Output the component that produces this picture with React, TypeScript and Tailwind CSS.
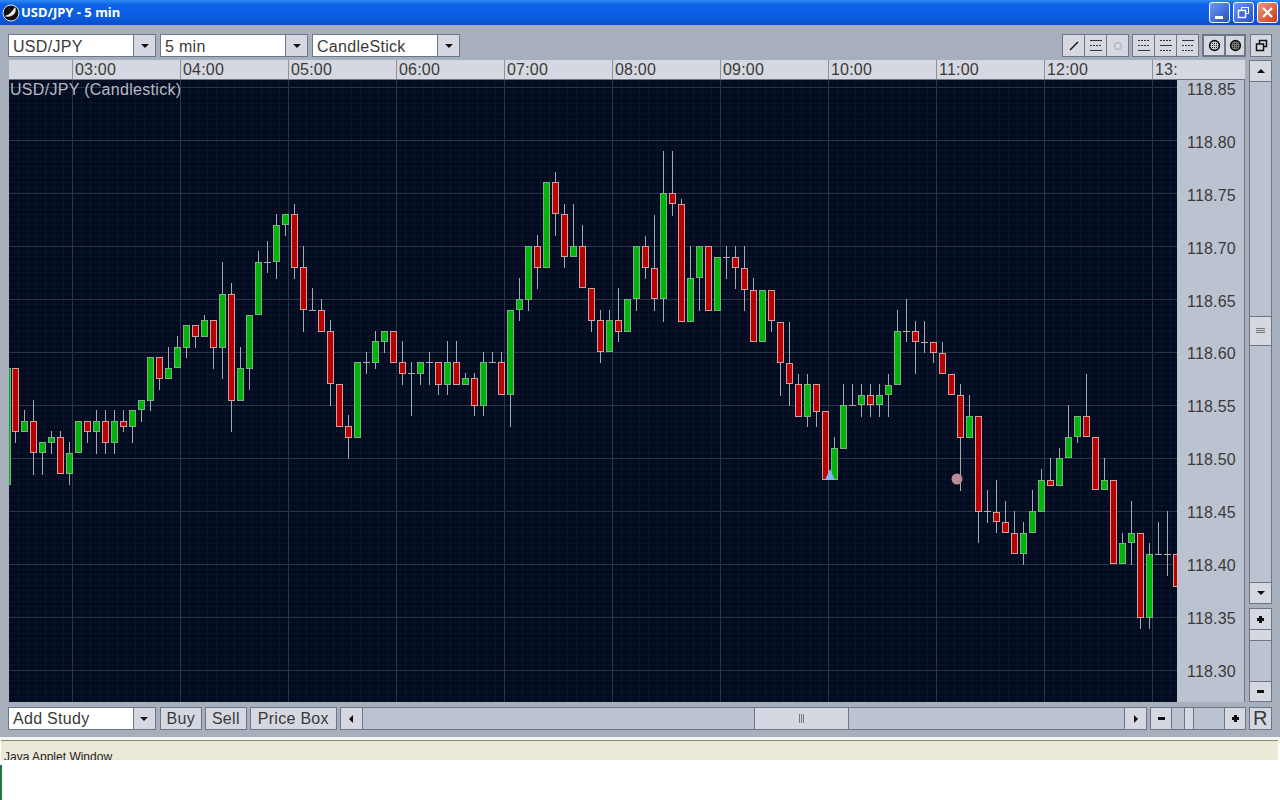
type Candle = [string, number, number, number?, number?];

// kind, body top, body bottom, wick top, wick bottom (page pixels). Second candle sits at x=15, then every 9px.
const candles: Candle[] = [
  ["g", 368, 485], ["r", 368, 432, 368, 443], ["g", 421, 432, 410, 432], ["r", 421, 453, 400, 475],
  ["g", 442, 453, 442, 475], ["g", 437, 443, 431, 454], ["r", 437, 474, 431, 474], ["g", 453, 474, 442, 485],
  ["g", 421, 453], ["r", 421, 432, 421, 443], ["g", 421, 432, 410, 454], ["r", 421, 443, 410, 454],
  ["g", 421, 443, 410, 454], ["r", 421, 427, 410, 432], ["g", 410, 427, 410, 443], ["g", 400, 410, 400, 422],
  ["g", 357, 401, 357, 411], ["r", 357, 379, 357, 390], ["g", 368, 379, 347, 379], ["g", 347, 368, 336, 368],
  ["g", 325, 348, 325, 358], ["r", 325, 337, 325, 348], ["g", 320, 337, 315, 337], ["r", 320, 348, 320, 369],
  ["g", 294, 348, 262, 379], ["r", 294, 401, 283, 432], ["g", 368, 401, 347, 401], ["g", 315, 369, 315, 390],
  ["g", 262, 315, 251, 315], ["d", 262, 262, 241, 273], ["g", 225, 262, 214, 279], ["g", 214, 225, 214, 236],
  ["r", 214, 268, 204, 279], ["r", 267, 310, 246, 332], ["d", 310, 310, 288, 310], ["r", 310, 332, 299, 332],
  ["r", 331, 384, 320, 406], ["r", 384, 427], ["r", 426, 438, 415, 459], ["g", 362, 438],
  ["d", 362, 362, 352, 374], ["g", 341, 363, 331, 369], ["g", 331, 342, 331, 353], ["r", 331, 363],
  ["r", 362, 374, 341, 385], ["d", 373, 373, 362, 416], ["g", 362, 374, 362, 385], ["d", 362, 362, 352, 385],
  ["r", 362, 385, 362, 395], ["g", 362, 385, 341, 395], ["r", 362, 385, 341, 385], ["g", 378, 385, 373, 385],
  ["r", 378, 406, 373, 416], ["g", 362, 406, 352, 416], ["d", 362, 362, 352, 362], ["r", 362, 395, 352, 395],
  ["g", 310, 395, 310, 427], ["g", 299, 310, 278, 321], ["g", 246, 300, 246, 311], ["r", 246, 268, 235, 289],
  ["g", 182, 268], ["r", 182, 214, 172, 236], ["r", 214, 257, 204, 268], ["g", 246, 257, 204, 257],
  ["r", 246, 288, 225, 288], ["r", 288, 321, 288, 332], ["r", 320, 352, 310, 363], ["g", 320, 352, 310, 352],
  ["r", 320, 332, 288, 342], ["g", 299, 332], ["g", 246, 299, 246, 311], ["r", 246, 268, 236, 279],
  ["r", 268, 299, 215, 311], ["g", 193, 299, 151, 322], ["r", 193, 204, 151, 216], ["r", 204, 322, 199, 322],
  ["g", 278, 322, 246, 322], ["g", 246, 278, 246, 311], ["r", 246, 311], ["g", 257, 311],
  ["d", 257, 257, 246, 279], ["r", 257, 268, 246, 289], ["r", 268, 290, 246, 311], ["r", 290, 342, 278, 342],
  ["g", 290, 342], ["r", 290, 321, 290, 332], ["r", 322, 363, 322, 396], ["r", 363, 384, 322, 406],
  ["r", 384, 417, 374, 417], ["g", 384, 417, 374, 427], ["r", 384, 412, 384, 427], ["r", 411, 480],
  ["g", 448, 480, 437, 480], ["g", 405, 449, 384, 449], ["d", 405, 405, 384, 405], ["g", 395, 405, 384, 417],
  ["r", 395, 405, 384, 417], ["g", 395, 405, 384, 417], ["g", 385, 395, 374, 417], ["g", 331, 385, 310, 385],
  ["d", 331, 331, 299, 342], ["r", 331, 342, 321, 374], ["d", 342, 342, 321, 353], ["r", 342, 353, 342, 363],
  ["r", 353, 374, 342, 374], ["r", 374, 395], ["r", 395, 438, 384, 491], ["g", 416, 438, 395, 438],
  ["r", 416, 512, 416, 543], ["d", 511, 511, 490, 523], ["r", 512, 522, 480, 533], ["r", 522, 533, 501, 533],
  ["r", 533, 554, 511, 554], ["g", 533, 554, 522, 565], ["g", 511, 533, 490, 533], ["g", 480, 512, 469, 512],
  ["r", 480, 486, 458, 486], ["g", 458, 486, 448, 486], ["g", 437, 458, 405, 458], ["g", 416, 437, 416, 443],
  ["r", 416, 437, 374, 437], ["r", 437, 490], ["g", 480, 490, 458, 490], ["r", 480, 564],
  ["g", 543, 564, 533, 564], ["g", 533, 543, 501, 565], ["r", 533, 618, 533, 629], ["g", 554, 618, 543, 629],
  ["d", 554, 554, 522, 554], ["d", 554, 554, 511, 576], ["r", 554, 587],
];

const majorH = [87, 140, 193, 246, 299, 352, 405, 458, 511, 564, 617, 670];
const majorV = [72, 180, 288, 396, 504, 612, 720, 828, 936, 1044, 1152];
const times = ["03:00", "04:00", "05:00", "06:00", "07:00", "08:00", "09:00", "10:00", "11:00", "12:00", "13:00"];
const prices = ["118.85", "118.80", "118.75", "118.70", "118.65", "118.60", "118.55", "118.50", "118.45", "118.40", "118.35", "118.30"];

function Tri({ dir }: { dir: "up" | "down" | "left" | "right" }) {
  const points = {
    up: "1,7 9,7 5,3",
    down: "1,3 9,3 5,7",
    left: "7,1 7,9 3,5",
    right: "3,1 3,9 7,5",
  }[dir];
  return (
    <svg width="10" height="10" viewBox="0 0 10 10">
      <polygon points={points} fill="#111" />
    </svg>
  );
}

function Sign({ plus }: { plus?: boolean }) {
  return (
    <svg width="9" height="9" viewBox="0 0 9 9">
      <rect x="1" y="3" width="7" height="3" fill="#111" />
      {plus && <rect x="3" y="1" width="3" height="7" fill="#111" />}
    </svg>
  );
}

function Select({ label, leading }: { label: string; leading: string }) {
  return (
    <div className="flex h-full w-[148px] border border-[#6e7685] bg-white">
      <div className={`flex-1 pl-[4px] text-[16px] tracking-[0.3px] text-[#3a3a3a] ${leading}`}>{label}</div>
      <div className="flex w-[22px] items-center justify-center border-l border-[#6e7685] bg-[#d5d8e0]">
        <Tri dir="down" />
      </div>
    </div>
  );
}

function Cell({ className, children }: { className: string; children?: React.ReactNode }) {
  return (
    <div className={`flex items-center justify-center border border-[#6e7685] bg-[#d5d8e0] ${className}`}>{children}</div>
  );
}

function Lines({ rows }: { rows: string[] }) {
  return (
    <svg width="12" height="11" viewBox="0 0 12 11" shapeRendering="crispEdges">
      {rows.map((dash, i) => (
        <line key={i} x1="0" x2="12" y1={i * 5 + 0.5} y2={i * 5 + 0.5} stroke="#333" strokeDasharray={dash} />
      ))}
    </svg>
  );
}

function Hatch({ id, dark }: { id: string; dark?: boolean }) {
  return (
    <svg width="13" height="13" viewBox="0 0 13 13">
      <defs>
        <pattern id={id} width="2" height="2" patternUnits="userSpaceOnUse">
          <rect width="2" height="2" fill={dark ? "#777" : "#c8ccd4"} />
          <rect width="1" height="1" fill="#222" />
        </pattern>
      </defs>
      <circle cx="6.5" cy="6.5" r="5" fill={`url(#${id})`} stroke="#111" strokeWidth="1.3" />
    </svg>
  );
}

function ToolGroup({ children, thick }: { children: React.ReactNode; thick?: boolean }) {
  return (
    <div className={`flex h-[23px] ${thick ? "w-[44px] border-2 border-[#6e7685]" : "w-[67px]"}`}>{children}</div>
  );
}

function Chart() {
  return (
    <svg width="1168" height="622" viewBox="9 80 1168 622" className="block" shapeRendering="crispEdges">
      <defs>
        <pattern id="minor" x="0" y="2" width="9" height="5.3" patternUnits="userSpaceOnUse">
          <rect width="9" height="5.3" fill="#030b20" />
          <line x1="0.5" x2="0.5" y1="0" y2="5.3" stroke="#0b1528" />
          <line x1="0" x2="9" y1="0.5" y2="0.5" stroke="#0b1528" />
        </pattern>
      </defs>
      <rect x="9" y="80" width="1168" height="622" fill="url(#minor)" />
      {majorH.map((y) => (
        <line key={y} x1="9" x2="1177" y1={y + 0.5} y2={y + 0.5} stroke="#2a3446" />
      ))}
      {majorV.map((x) => (
        <line key={x} x1={x + 0.5} x2={x + 0.5} y1="80" y2="702" stroke="#2a3446" />
      ))}
      {candles.map(([kind, top, bottom, wickTop, wickBottom], i) => {
        const x = i === 0 ? 7 : 6 + i * 9;
        const wt = wickTop ?? top;
        const wb = wickBottom ?? bottom;
        return (
          <g key={i}>
            {(wt < top || wb > bottom) && (
              <line x1={x + 0.5} x2={x + 0.5} y1={wt} y2={wb} stroke="#a4aab4" />
            )}
            {kind === "d" ? (
              <line x1={x - 3} x2={x + 4} y1={top + 0.5} y2={top + 0.5} stroke="#a9adb5" />
            ) : (
              <rect
                x={x - 2.5}
                y={top + 0.5}
                width="6"
                height={bottom - top - 1}
                fill={kind === "g" ? "#00b40a" : "#bb0000"}
                stroke={kind === "g" ? "#7cb084" : "#cda2a4"}
              />
            )}
          </g>
        );
      })}
      <g shapeRendering="auto">
        <polygon points="830,469 835,480 825,480" fill="#79b8ea" />
        <circle cx="957" cy="479" r="5.5" fill="#b58d92" />
      </g>
    </svg>
  );
}

export default function App() {
  return (
    <div className="flex h-[800px] w-[1280px] flex-col overflow-hidden bg-white font-['Liberation_Sans',Arial,sans-serif]">
      {/* Title bar */}
      <div className="flex h-[25px] items-center bg-[linear-gradient(180deg,#2f8af2_0%,#0f63e6_18%,#0a5be0_70%,#0a4ec6_100%)] pl-[2px] pr-[2px]">
        <svg width="18" height="18" viewBox="0 0 18 18">
          <circle cx="9" cy="9" r="8" fill="#111" stroke="#dfe6f2" strokeWidth="1" />
          <path d="M2 12 C6 12 10 8 13 3 C16 8 10 15 2 12 Z" fill="#e8e8e8" />
        </svg>
        <div className="ml-[1px] font-['Noto_Sans',sans-serif] text-[13px] font-bold text-white">USD/JPY - 5 min</div>
        <div className="ml-auto flex items-center gap-[3px]">
          <div className="flex h-[21px] w-[21px] items-end rounded-[3px] border border-white bg-[linear-gradient(135deg,#6f97ef,#2350c8)] pb-[3px] pl-[5px]">
            <div className="h-[3px] w-[8px] bg-white" />
          </div>
          <div className="flex h-[21px] w-[21px] items-center justify-center rounded-[3px] border border-white bg-[linear-gradient(135deg,#6f97ef,#2350c8)]">
            <svg width="13" height="13" viewBox="0 0 13 13" fill="none" stroke="#fff">
              <rect x="4.5" y="1.5" width="7" height="6" />
              <rect x="1.5" y="4.5" width="7" height="7" fill="#3f68d8" strokeWidth="1.4" />
            </svg>
          </div>
          <div className="flex h-[21px] w-[21px] items-center justify-center rounded-[3px] border border-white bg-[linear-gradient(135deg,#ec9a80,#c93a18)]">
            <svg width="13" height="13" viewBox="0 0 13 13" stroke="#fff" strokeWidth="2.2">
              <line x1="2" y1="2" x2="11" y2="11" />
              <line x1="11" y1="2" x2="2" y2="11" />
            </svg>
          </div>
        </div>
      </div>

      {/* Window body */}
      <div className="h-[712px] bg-[#a7aebc] pl-[8px] pr-[8px] pt-[9px]">
        <div className="flex h-[23px] items-start">
          <div className="flex h-full gap-[4px]">
            <Select label="USD/JPY" leading="leading-[23px]" />
            <Select label="5 min" leading="leading-[23px]" />
            <Select label="CandleStick" leading="leading-[23px]" />
          </div>
          <div className="ml-auto flex gap-[3px]">
            <ToolGroup>
              <Cell className="w-[23px]">
                <svg width="10" height="10" viewBox="0 0 10 10">
                  <line x1="1" y1="9" x2="9" y2="1" stroke="#111" strokeWidth="1.5" />
                </svg>
              </Cell>
              <Cell className="-ml-px w-[23px]"><Lines rows={["none", "2 1", "none"]} /></Cell>
              <Cell className="-ml-px w-[23px] bg-[#bcc1cb]">
                <svg width="10" height="10" viewBox="0 0 10 10" fill="none" stroke="#a3a8b2">
                  <circle cx="5" cy="5" r="3.5" />
                </svg>
              </Cell>
            </ToolGroup>
            <ToolGroup>
              <Cell className="w-[23px]"><Lines rows={["2 1", "2 1", "none"]} /></Cell>
              <Cell className="-ml-px w-[23px]"><Lines rows={["2 1", "none", "2 1"]} /></Cell>
              <Cell className="-ml-px w-[23px]"><Lines rows={["none", "2 1", "2 1"]} /></Cell>
            </ToolGroup>
            <ToolGroup thick>
              <Cell className="w-[20px] border-0"><Hatch id="hatch-light" /></Cell>
              <Cell className="w-[20px] border-0 border-l-2 border-[#6e7685]"><Hatch id="hatch-dark" dark /></Cell>
            </ToolGroup>
            <Cell className="ml-[1px] h-[23px] w-[22px]">
              <svg width="13" height="13" viewBox="0 0 13 13" fill="#d5d8e0" stroke="#111" strokeWidth="1.5">
                <rect x="4.5" y="1.5" width="7" height="6" />
                <rect x="1.5" y="5" width="7" height="6.5" />
              </svg>
            </Cell>
          </div>
        </div>

        {/* Chart with axes and zoom column */}
        <div className="mt-[3px] flex h-[642px] pl-[1px]">
          <div className="grid grid-cols-[1168px_68px] grid-rows-[20px_622px]">
            <div className="flex overflow-hidden border-b border-[#6e7685] bg-[#d5d8e0] text-[16px] leading-[20px] tracking-[0.2px] text-[#3a3a3a]">
              <div className="w-[63px] shrink-0" />
              {times.map((time) => (
                <div key={time} className="w-[108px] shrink-0 border-l border-[#8a91a0] pl-[2px]">{time}</div>
              ))}
            </div>
            <div className="border-b border-[#6e7685] bg-[#d5d8e0]" />
            <div className="relative">
              <Chart />
              <div className="absolute left-[1px] top-0 text-[16px] leading-[19px] tracking-[0.3px] text-[#b5bac4]">USD/JPY (Candlestick)</div>
            </div>
            <div className="flex flex-col gap-[32.9px] overflow-hidden border-r border-[#6e7685] bg-[#bcc3d0] pl-[10px] text-[16px] leading-[20px] tracking-[0.2px] text-[#3a3a3a]">
              {prices.map((price) => (
                <div key={price} className="h-[20px]">{price}</div>
              ))}
            </div>
          </div>
          <div className="ml-[4px] flex w-[23px] flex-col">
            <Cell className="h-[22px]"><Tri dir="up" /></Cell>
            <div className="h-[234px] border-x border-[#6e7685] bg-[#bcc3d0]" />
            <Cell className="h-[30px]">
              <svg width="9" height="6" viewBox="0 0 9 6" stroke="#777" shapeRendering="crispEdges">
                <line x1="0" x2="9" y1="0.5" y2="0.5" />
                <line x1="0" x2="9" y1="2.5" y2="2.5" />
                <line x1="0" x2="9" y1="4.5" y2="4.5" />
              </svg>
            </Cell>
            <div className="h-[236px] border-x border-[#6e7685] bg-[#bcc3d0]" />
            <Cell className="h-[22px]"><Tri dir="down" /></Cell>
            <Cell className="mt-[4px] h-[22px]"><Sign plus /></Cell>
            <div className="h-[11px] border-x border-b border-[#6e7685] bg-[#d5d8e0]" />
            <div className="h-[40px] border-x border-[#6e7685] bg-[#bcc3d0]" />
            <Cell className="h-[21px]"><Sign /></Cell>
          </div>
        </div>

        {/* Bottom controls */}
        <div className="mt-[5px] flex h-[23px] text-[16px] leading-[21px] tracking-[0.3px] text-[#3a3a3a]">
          <Select label="Add Study" leading="leading-[21px]" />
          <Cell className="ml-[4px] w-[42px]">Buy</Cell>
          <Cell className="ml-[3px] w-[42px]">Sell</Cell>
          <Cell className="ml-[3px] w-[87px]">Price Box</Cell>
          <Cell className="ml-[3px] w-[23px] shrink-0"><Tri dir="left" /></Cell>
          <div className="w-[392px] border-y border-[#6e7685] bg-[#bcc3d0]" />
          <Cell className="w-[95px]">
            <svg width="6" height="9" viewBox="0 0 6 9" stroke="#777" shapeRendering="crispEdges">
              <line x1="0.5" x2="0.5" y1="0" y2="9" />
              <line x1="2.5" x2="2.5" y1="0" y2="9" />
              <line x1="4.5" x2="4.5" y1="0" y2="9" />
            </svg>
          </Cell>
          <div className="w-[275px] border-y border-[#6e7685] bg-[#bcc3d0]" />
          <Cell className="w-[23px]"><Tri dir="right" /></Cell>
          <Cell className="ml-[3px] w-[22px]"><Sign /></Cell>
          <div className="w-[12px] border-y border-[#6e7685] bg-[#bcc3d0]" />
          <div className="w-[10px] border-x border-y border-[#6e7685] bg-[#d5d8e0]" />
          <div className="w-[30px] border-y border-[#6e7685] bg-[#bcc3d0]" />
          <Cell className="w-[22px]"><Sign plus /></Cell>
          <Cell className="ml-[3px] w-[23px] text-[20px] font-light">R</Cell>
        </div>
      </div>

      {/* Applet status strip, cut off by the capture */}
      <div className="h-[3px] bg-[#f4f4f2]" />
      <div className="ml-[1px] mr-[2px] h-[20px] overflow-hidden border-t border-[#8c8a70] bg-[#ece9d8] pl-[3px] text-[12px] leading-[33px] text-[#222]">
        Java Applet Window
      </div>
      <div className="flex-1 pt-[5px]">
        <div className="h-full w-[2px] bg-[#1a7a3c]" />
      </div>
    </div>
  );
}
